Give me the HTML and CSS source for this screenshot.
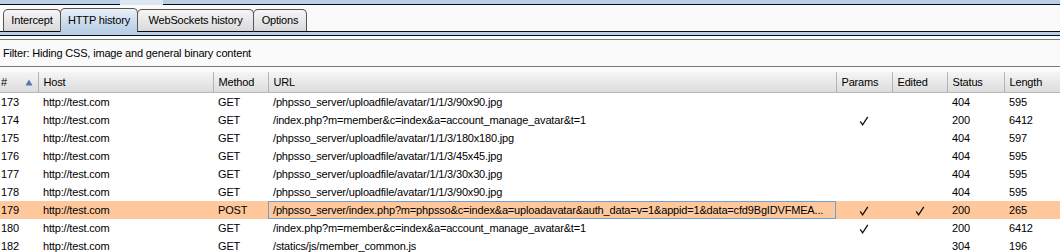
FILE: index.html
```html
<!DOCTYPE html>
<html lang="en">
<head>
    <meta charset="UTF-8">
    <title>Proxy - HTTP history</title>
    <link rel="stylesheet" href="styles.css">
</head>
<body>

    <!-- Outer tab strip (bottom edge only) -->
    <div class="outer-strip">
        <div class="outer-line outer-left"></div>
        <div class="outer-gap"></div>
        <div class="outer-line outer-rest"></div>
    </div>

    <!-- Proxy tabs -->
    <div class="tabs">
        <div class="tab-edge"></div>
        <div class="tab tab-intercept">Intercept</div>
        <div class="tab tab-history active">HTTP history</div>
        <div class="tab tab-ws">WebSockets history</div>
        <div class="tab tab-options">Options</div>
        <div class="tab-fill"></div>
    </div>
    <div class="tab-band"></div>

    <!-- Filter bar -->
    <div class="filter">Filter: Hiding CSS, image and general binary content</div>

    <!-- History table -->
    <table class="history">
        <colgroup>
            <col class="c-num">
            <col class="c-host">
            <col class="c-method">
            <col class="c-url">
            <col class="c-params">
            <col class="c-edited">
            <col class="c-status">
            <col class="c-length">
        </colgroup>
        <thead>
            <tr>
                <th class="num-col">
                    <span class="th-num">#
                        <svg class="sort" width="8" height="7" viewBox="0 0 8 7"><path d="M4 0.5 L7.5 6.5 L0.5 6.5 Z" fill="#4f79aa"/></svg>
                    </span>
                </th>
                <th>Host</th>
                <th>Method</th>
                <th>URL</th>
                <th>Params</th>
                <th>Edited</th>
                <th>Status</th>
                <th>Length</th>
            </tr>
        </thead>
        <tbody id="historyBody"></tbody>
    </table>

    <script>
        // rows shown in the history list
        const rows = [
            { n: 173, method: 'GET', url: '/phpsso_server/uploadfile/avatar/1/1/3/90x90.jpg', params: false, edited: false, status: 404, len: 595 },
            { n: 174, method: 'GET', url: '/index.php?m=member&c=index&a=account_manage_avatar&t=1', params: true, edited: false, status: 200, len: 6412 },
            { n: 175, method: 'GET', url: '/phpsso_server/uploadfile/avatar/1/1/3/180x180.jpg', params: false, edited: false, status: 404, len: 597 },
            { n: 176, method: 'GET', url: '/phpsso_server/uploadfile/avatar/1/1/3/45x45.jpg', params: false, edited: false, status: 404, len: 595 },
            { n: 177, method: 'GET', url: '/phpsso_server/uploadfile/avatar/1/1/3/30x30.jpg', params: false, edited: false, status: 404, len: 595 },
            { n: 178, method: 'GET', url: '/phpsso_server/uploadfile/avatar/1/1/3/90x90.jpg', params: false, edited: false, status: 404, len: 595 },
            { n: 179, method: 'POST', url: '/phpsso_server/index.php?m=phpsso&c=index&a=uploadavatar&auth_data=v=1&appid=1&data=cfd9BgIDVFMEA...', params: true, edited: true, status: 200, len: 265, selected: true },
            { n: 180, method: 'GET', url: '/index.php?m=member&c=index&a=account_manage_avatar&t=1', params: true, edited: false, status: 200, len: 6412 },
            { n: 182, method: 'GET', url: '/statics/js/member_common.js', params: false, edited: false, status: 304, len: 196 }
        ];

        const tick = '<svg class="tick" width="10" height="10" viewBox="0 0 10 10"><path d="M1.2 5.4 L3.6 8.8 L8.8 0.8" fill="none" stroke="#111" stroke-width="1.3"/></svg>';

        const body = document.getElementById('historyBody');
        rows.forEach(r => {
            const row = `<tr class="${r.selected ? 'selected' : ''}">
                            <td class="num-col">${r.n}</td>
                            <td>http://test.com</td>
                            <td>${r.method}</td>
                            <td class="${r.selected ? 'focus' : ''}">${r.url}</td>
                            <td class="center">${r.params ? tick : ''}</td>
                            <td class="center">${r.edited ? tick : ''}</td>
                            <td>${r.status}</td>
                            <td>${r.len}</td>
                        </tr>`;
            body.insertAdjacentHTML('beforeend', row);
        });
    </script>

</body>
</html>
```

FILE: styles.css
```css
body {
    margin: 0;
    padding: 0;
    font-family: 'Liberation Sans', Arial, sans-serif;
    font-size: 11px;
    letter-spacing: -0.17px;
    color: #000;
    background-color: #fafafa;
    overflow: hidden;
}

/* Outer strip */
.outer-strip {
    display: flex;
    height: 5px;
}

.outer-line {
    background-color: #b8cfe5;
    border-bottom: 1px solid #0a0a14;
    height: 4px;
}

.outer-left {
    width: 120px;
}

.outer-gap {
    width: 43px;
    background-color: #dbe6f1;
}

.outer-rest {
    flex: 1;
}

/* Tabs */
.tabs {
    display: flex;
    align-items: flex-end;
    height: 27px;
}

.tab-edge {
    width: 3px;
    border-bottom: 1px solid #0a0a14;
}

.tab {
    box-sizing: border-box;
    height: 23px;
    line-height: 21px;
    text-align: center;
    white-space: nowrap;
    border: 1px solid #555;
    border-bottom: 1px solid #0a0a14;
    border-radius: 5px 5px 0 0;
    background: linear-gradient(#f6f6f6, #d9d9d9);
    margin-right: -1px;
}

.tab-intercept { width: 58px; }
.tab-history { width: 78px; }
.tab-ws { width: 117px; }
.tab-options { width: 54px; }

.tab.active {
    height: 24px;
    line-height: 23px;
    background: linear-gradient(#e9f0f7, #b8cfe5);
    border-bottom-color: #b8cfe5;
}

.tab-fill {
    flex: 1;
    border-bottom: 1px solid #0a0a14;
}

.tab-band {
    height: 3px;
    background-color: #b8cfe5;
    border-bottom: 1px solid #0a0a14;
    margin-bottom: 3px;
}

/* Filter bar */
.filter {
    height: 26px;
    line-height: 26px;
    padding-left: 3px;
    border-top: 1px solid #7a7a7a;
    border-bottom: 1px solid #7a7a7a;
    background-color: #fafafa;
    margin-bottom: 5px;
}

/* Table */
.history {
    width: 1060px;
    table-layout: fixed;
    border-collapse: collapse;
    background-color: #fff;
}

.c-num { width: 38px; }
.c-host { width: 175px; }
.c-method { width: 55px; }
.c-url { width: 568px; }
.c-params { width: 56px; }
.c-edited { width: 55px; }
.c-status { width: 57px; }
.c-length { width: 56px; }

.history th {
    height: 20px;
    padding: 0 0 0 5px;
    text-align: left;
    font-weight: 400;
    background: linear-gradient(#f5f5f5, #dcdcdc);
    border-left: 1px solid #b4b4b4;
    border-bottom: 1px solid #b8b8b8;
    white-space: nowrap;
}

.history th.num-col {
    border-left: none;
    padding-left: 1px;
}

.th-num {
    display: flex;
    align-items: center;
    justify-content: space-between;
    padding-right: 5px;
}

.sort {
    display: block;
}

.history td {
    height: 18px;
    padding: 0 0 0 5px;
    white-space: nowrap;
    overflow: hidden;
    box-sizing: border-box;
}

.history td.num-col {
    padding-left: 1px;
}

.history td.center {
    text-align: center;
    padding: 0;
}

.tick {
    display: inline-block;
    vertical-align: middle;
}

tr.selected td {
    background-color: #ffc89c;
}

tr.selected td.focus {
    outline: 1px solid #6e9fd6;
    outline-offset: -1px;
}
```
